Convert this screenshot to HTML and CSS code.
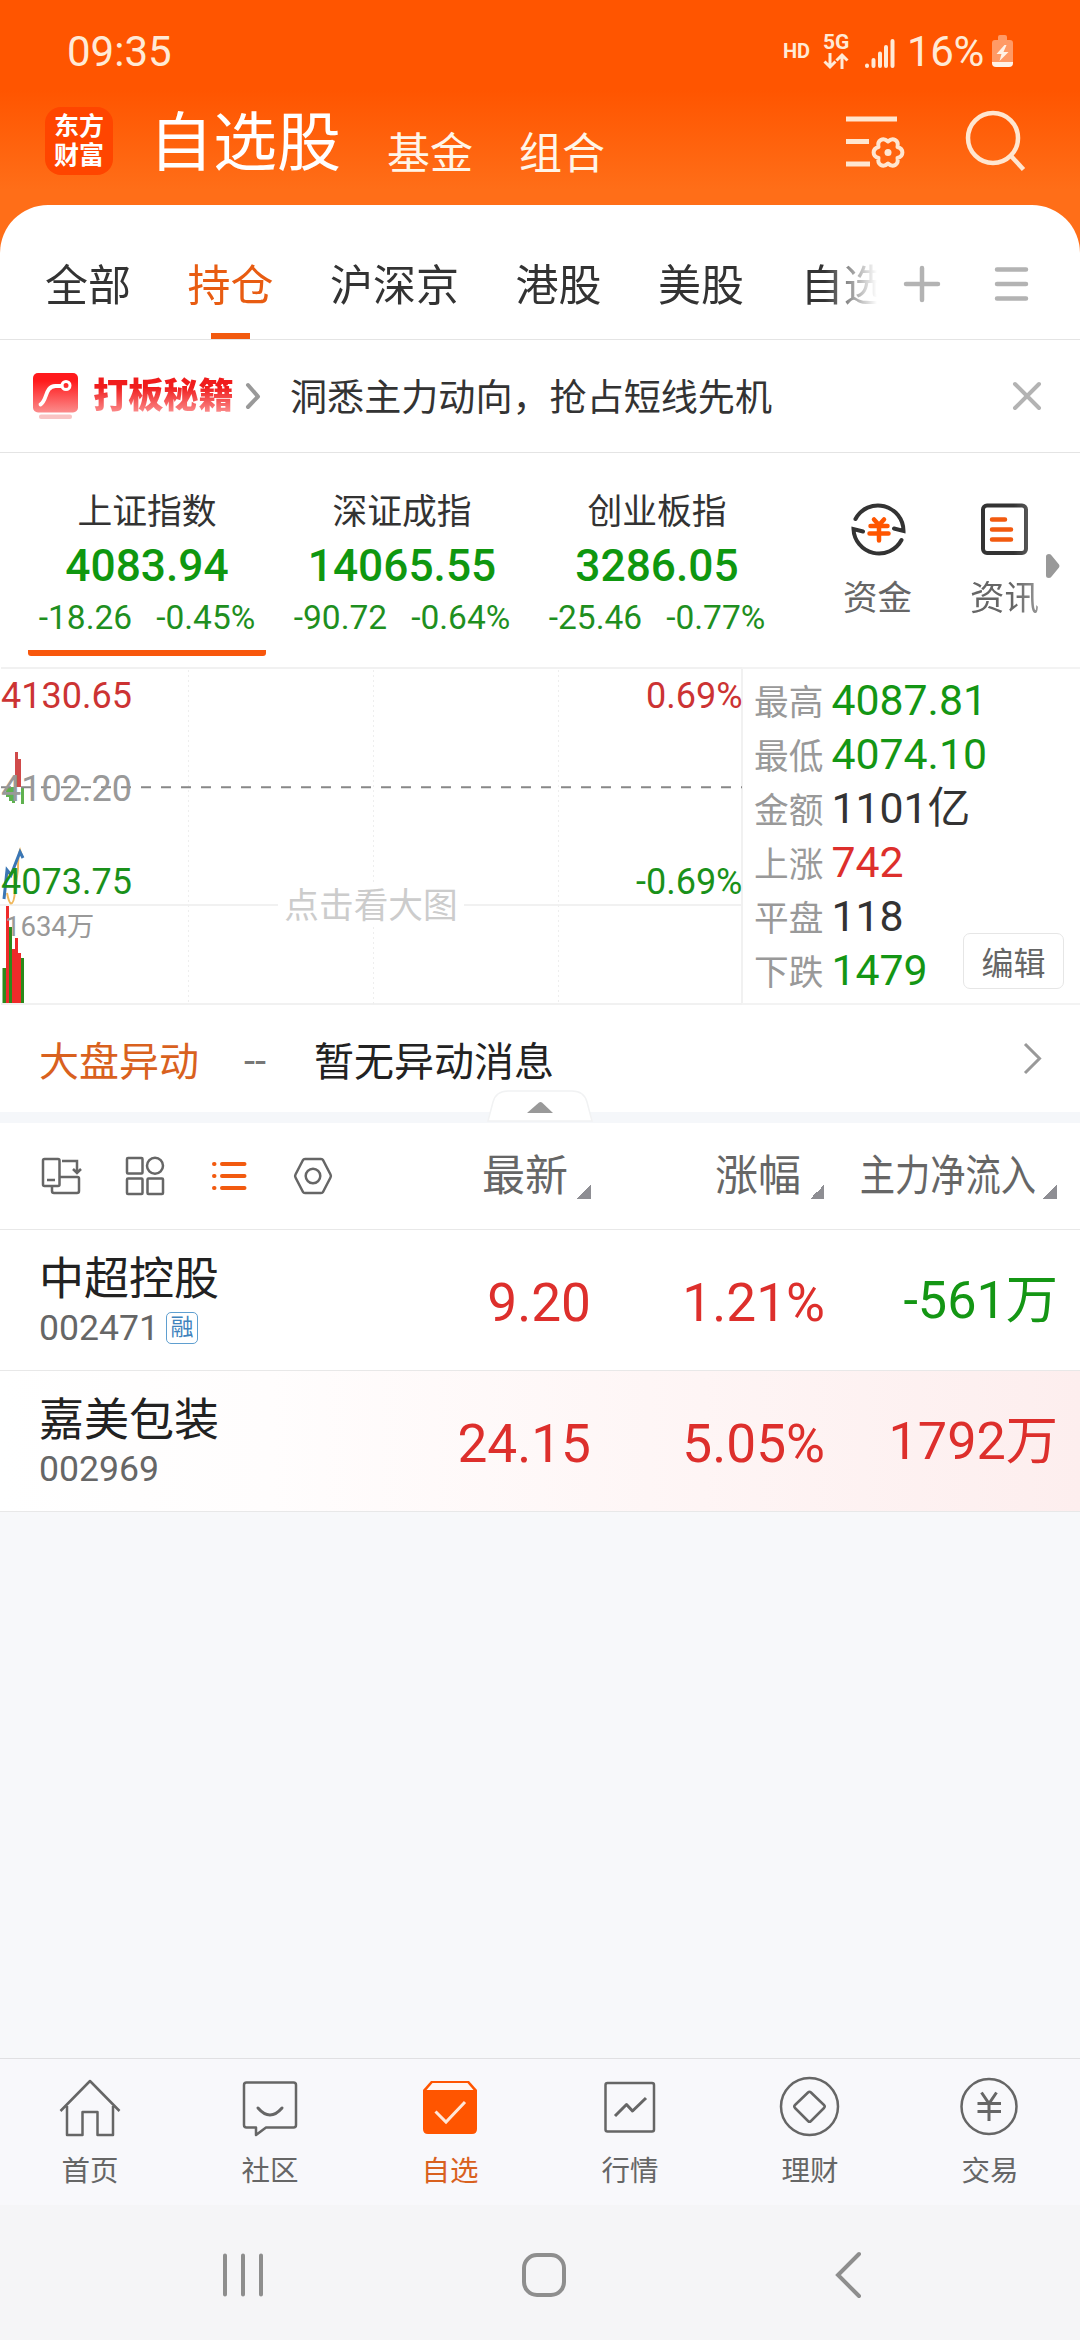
FILE: index.html
```html
<!DOCTYPE html>
<html lang="zh-CN">
<head>
<meta charset="utf-8">
<title>自选股</title>
<link rel="stylesheet" href="styles.css">
</head>
<body>
<div class="app">
  <header class="top">
    <div class="status">
      <span class="clock">09:35</span>
      <span class="hd">HD</span>
      <span class="net"><span class="net-label">5G</span>
        <svg width="26" height="16" viewBox="0 0 26 16" fill="none" stroke="#ffead6" stroke-width="3"><path d="M7 0v14M1.500 8.500L7 14l5.500-5.500M19 16V2M13.500 7.500L19 2l5.500 5.500"/></svg>
      </span>
      <svg class="signal" width="30" height="30" viewBox="0 0 30 30" stroke="#ffead6" stroke-width="4" stroke-linecap="round"><path d="M2 27.500v.5M8.500 22v6M15 15.500V28M21 9v19M27.500 3v25"/></svg>
      <span class="percent">16%</span>
      <svg class="battery" width="22" height="32" viewBox="0 0 22 32"><path d="M6 2q0-2 2-2h5q2 0 2 2v3h3q3 0 3 3v19H0V8q0-3 3-3h3z" fill="#ff9a66"/><path d="M0 27h21v1q0 4-4 4H4q-4 0-4-4z" fill="#fff3e8"/><path d="M12.500 10L4.500 19h5l-2 7 9-9h-5l3-7z" fill="#fff3e8"/></svg>
    </div>
    <div class="titlebar">
      <div class="logo"><span>东方</span><span>财富</span></div>
      <nav class="sections"><b class="main">自选股</b><span>基金</span><span>组合</span></nav>
      <svg class="tool-settings" width="60" height="60" viewBox="0 0 60 60" fill="none" stroke="#ffe6d0" stroke-width="5"><path d="M2 10h51M2 32.500h23M2 55h24"/><path stroke-width="4" stroke-linejoin="round" transform="translate(44 43.500)" d="M9.500-5.500C16-3.500 16 3.500 9.500 5.500 11 12.100 5 15.600 0 11-5 15.600-11 12.100-9.500 5.500-16 3.500-16-3.500-9.500-5.500-11-12.100-5-15.600 0-11 5-15.600 11-12.100 9.500-5.500z"/><circle cx="44" cy="43.500" r="3.500" fill="#ffe6d0" stroke="none"/></svg>
      <svg class="tool-search" width="62" height="62" viewBox="0 0 62 62" fill="none" stroke="#ffe6d0" stroke-width="4.500"><circle cx="29" cy="29" r="25"/><path d="M47 47l12.500 13.500"/></svg>
    </div>
  </header>

  <main class="sheet">
    <div class="groups">
      <div class="group-list"><span>全部</span><span class="active">持仓</span><span>沪深京</span><span>港股</span><span>美股</span><span>自选</span></div>
      <svg class="g-add" width="38" height="38" viewBox="0 0 38 38" stroke="#b3b3b3" stroke-width="4.500" stroke-linecap="round"><path d="M19 3v32M3 19h32"/></svg>
      <svg class="g-menu" width="38" height="38" viewBox="0 0 38 38" stroke="#b3b3b3" stroke-width="4.500" stroke-linecap="round"><path d="M4 4.500h29M4 19h29M4 33.500h29"/></svg>
    </div>

    <div class="promo">
      <svg class="promo-icon" width="46" height="46" viewBox="0 0 46 46"><defs><linearGradient id="pg" x2="0" y2="1"><stop offset=".2" stop-color="#ff1a1c"/><stop offset="1" stop-color="#fb8c8c"/></linearGradient></defs><rect width="45" height="39.500" rx="5" fill="url(#pg)"/><rect x="6" y="41.500" width="33" height="4.500" rx="2" fill="#f9c4c4"/><path d="M7.500 31.500c7-4 4-18 15-18.500h6" fill="none" stroke="#fff" stroke-width="3.800" stroke-linecap="round"/><circle cx="33" cy="12.500" r="4" fill="none" stroke="#fff" stroke-width="3"/></svg>
      <span class="promo-brand">打板秘籍</span>
      <svg class="promo-arrow" width="16" height="28" viewBox="0 0 16 28" fill="none" stroke="#999" stroke-width="4" stroke-linecap="round" stroke-linejoin="round"><path d="M3 3l10 11.500L3 25"/></svg>
      <span class="promo-text">洞悉主力动向，抢占短线先机</span>
      <svg class="promo-close" width="30" height="30" viewBox="0 0 30 30" stroke="#b3b3b3" stroke-width="4" stroke-linecap="round"><path d="M3 3l24 24M27 3L3 27"/></svg>
    </div>

    <div class="indices">
      <div class="index active"><span class="i-name">上证指数</span><span class="i-value">4083.94</span><span class="i-chg"><i>-18.26</i><i>-0.45%</i></span></div>
      <div class="index"><span class="i-name">深证成指</span><span class="i-value">14065.55</span><span class="i-chg"><i>-90.72</i><i>-0.64%</i></span></div>
      <div class="index"><span class="i-name">创业板指</span><span class="i-value">3286.05</span><span class="i-chg"><i>-25.46</i><i>-0.77%</i></span></div>
      <div class="links">
        <div class="link">
          <svg width="60" height="60" viewBox="0 0 60 60" fill="none" stroke="#333" stroke-width="4" stroke-linecap="round"><path d="M7.500 20A25.500 25.500 0 0 1 55.500 32l-9.500-2.500M53.500 41A25.500 25.500 0 0 1 5.500 30l9.500 2.500"/><path stroke="#ff5500" stroke-width="4.500" d="M26 20.500l5 5.500 5-5.500M22.500 27h17M21.500 34.500h19M31 26v15.500"/></svg>
          <span>资金</span>
        </div>
        <div class="link">
          <svg width="60" height="60" viewBox="0 0 60 60" fill="none" stroke="#333" stroke-width="4" stroke-linecap="round"><rect x="8" y="6.500" width="43" height="47.500" rx="4"/><path stroke="#f25a0f" stroke-width="4.500" d="M17 20.500h13M17 30.500h19M17 40.500h19"/></svg>
          <span>资讯</span>
        </div>
        <svg class="more" width="14" height="24" viewBox="0 0 14 24" fill="#999"><path d="M0 2.500Q0 0 3 0q2 0 3 2l7 8.500q1 1.500 0 3L6 22q-1 2-3 2-3 0-3-2.500z"/></svg>
      </div>
    </div>

    <div class="market">
      <svg class="chart" width="742" height="338" viewBox="0 0 742 338">
        <g stroke="#f1f1f1" stroke-width="2"><path d="M1 1h741M0 238h278M464 238h278M1 337h741M742 0v338"/></g>
        <path d="M188.500 3v334M373.500 3v213M373.500 260v77M558.500 3v334" stroke="#eee" stroke-dasharray="2 3"/>
        <g fill="#d04a4a"><path d="M15 85h3v35h-3zM18 92h3v28h-3z"/></g>
        <g fill="#5fb14f"><path d="M6 120h3v10H6zM9 120h3v14H9zM12 120h3v16h-3zM21 120h3v17h-3z"/></g>
        <path d="M1 120.300h741" stroke="#888" stroke-width="2" stroke-dasharray="10 10"/>
        <path d="M7 226q2 10 4 10.500 3 0 4-12.500l3-22q0-14 2-19l2 6" fill="none" stroke="#f0b95e" stroke-width="2"/>
        <path d="M4 232l3-29 4 5 9-23 3 6" fill="none" stroke="#3a76b5" stroke-width="3"/>
        <g fill="#ee2a2a"><path d="M6 239h3v97H6zM12 282h3v54h-3zM15 271h3v65h-3zM18 286h3v50h-3z"/></g>
        <g fill="#2b8a1a"><path d="M2.500 301H6v35H2.500zM9 260h3v76H9zM21 291h3v45h-3z"/></g>
        <g font-size="36">
          <text x="1" y="41" fill="#cc3333">4130.65</text>
          <text x="1" y="133.500" fill="#999">4102.20</text>
          <text x="1" y="227" fill="#1a911a">4073.75</text>
          <g text-anchor="end"><text x="742.500" y="41" fill="#cc3333">0.69%</text><text x="742.500" y="227" fill="#1a911a">-0.69%</text></g>
        </g>
        <text x="5" y="269" fill="#999" font-size="27.500">1634万</text>
        <text x="371" y="251" fill="#ccc" font-size="34.700" text-anchor="middle">点击看大图</text>
      </svg>
      <div class="stats">
        <div><span>最高</span><b class="down">4087.81</b></div>
        <div><span>最低</span><b class="down">4074.10</b></div>
        <div><span>金额</span><b>1101亿</b></div>
        <div><span>上涨</span><b class="up">742</b></div>
        <div><span>平盘</span><b>118</b></div>
        <div><span>下跌</span><b class="down">1479</b></div>
        <button class="edit">编辑</button>
      </div>
    </div>

    <div class="alerts">
      <span class="a-title">大盘异动</span><span class="a-dash">--</span><span class="a-text">暂无异动消息</span>
      <svg class="a-arrow" width="20" height="34" viewBox="0 0 20 34" fill="none" stroke="#999" stroke-width="3"><path d="M2 3l14.500 14.500L2 32"/></svg>
    </div>
    <div class="divider">
      <svg class="handle" width="108" height="34" viewBox="0 0 108 34"><path d="M2 32L7 13Q10 2 22 2H86Q98 2 101 13l5 19z" fill="#fff" stroke="#f1f2f3" stroke-width="1.500"/><path d="M28 24l12-10.500q1.500-1 3 0L54 24z" transform="translate(13)" fill="#999"/></svg>
    </div>

    <div class="cols">
      <div class="views">
        <svg width="40" height="40" viewBox="0 0 40 40" fill="none" stroke="#666" stroke-width="2.500"><rect x="2" y="3" width="16.500" height="27" rx="1.500"/><path d="M6 24h8M21 5h15v10M32 13l4 4 4-4M19 21h17.500q1.500 0 1.500 1.500V35q0 2-2 2H13q-2 0-2-2v-5"/></svg>
        <svg width="40" height="40" viewBox="0 0 40 40" fill="none" stroke="#666" stroke-width="2.500"><rect x="2" y="2" width="15.500" height="15.500" rx="1"/><circle cx="30" cy="9.800" r="8"/><rect x="2" y="22.500" width="15.500" height="15.500" rx="1"/><rect x="22.500" y="22.500" width="15.500" height="15.500" rx="1"/></svg>
        <svg width="40" height="40" viewBox="0 0 40 40" stroke="#f25a0f" stroke-width="4" stroke-linecap="round"><path d="M5 8h.5M13 8h22.500M5 20h.5M13 20h22.500M5 32h.5M13 32h22.500"/></svg>
        <svg width="40" height="40" viewBox="0 0 40 40" fill="none" stroke="#666" stroke-width="2.500" stroke-linejoin="round"><path d="M12 3h16q1.500 0 2 1l7.500 14.500q.8 1.500 0 3L30 36q-.5 1-2 1H12q-1.500 0-2-1L2.500 21.500q-.8-1.500 0-3L10 4q.5-1 2-1z"/><circle cx="20" cy="20" r="7.300"/></svg>
      </div>
      <div class="col c1">最新</div>
      <div class="col c2">涨幅</div>
      <div class="col c3"><span>主力净流入</span></div>
    </div>

    <div class="stock">
      <div class="who"><span class="name">中超控股</span><span class="code">002471<em>融</em></span></div>
      <span class="n n1 up">9.20</span><span class="n n2 up">1.21%</span><span class="n n3 down">-561万</span>
    </div>
    <div class="stock hot">
      <div class="who"><span class="name">嘉美包装</span><span class="code">002969</span></div>
      <span class="n n1 up">24.15</span><span class="n n2 up">5.05%</span><span class="n n3 up">1792万</span>
    </div>
  </main>

  <nav class="tabbar">
    <a><svg width="64" height="64" viewBox="0 0 64 64" fill="none" stroke="#666" stroke-width="2.500" stroke-linejoin="round"><path d="M2.500 38L32 8l29.500 30M9 33v29h15.500V39h15v23H55V33"/></svg><span>首页</span></a>
    <a><svg width="64" height="64" viewBox="0 0 64 64" fill="none" stroke="#666" stroke-width="2.500" stroke-linejoin="round"><path d="M8.500 9.500h47q2.500 0 2.500 2.500v40q0 2.500-2.500 2.500H28l-10 7.500v-7.500H8.500Q6 54.500 6 52V12q0-2.500 2.500-2.500z"/><path stroke-linecap="round" stroke-width="3" d="M20 35q12 14 24 0"/></svg><span>社区</span></a>
    <a class="on"><svg width="64" height="64" viewBox="0 0 64 64"><path d="M5 17L13 8h38l8 9v39q0 5-5 5H10q-5 0-5-5z" fill="#ff5500"/><path d="M8.500 17L14.500 10h35l6 7z" fill="#fff7f2"/><path d="M17.500 38.500L28 49l19-20" fill="none" stroke="#ffe6d8" stroke-width="3"/></svg><span>自选</span></a>
    <a><svg width="64" height="64" viewBox="0 0 64 64" fill="none" stroke="#666" stroke-width="2.500" stroke-linejoin="round"><rect x="7.500" y="10" width="48.500" height="48.500" rx="2"/><path stroke-width="3" d="M17 43l11.500-11.500L34.500 38 48 25"/></svg><span>行情</span></a>
    <a><svg width="64" height="64" viewBox="0 0 64 64" fill="none" stroke="#666" stroke-width="2.500" stroke-linejoin="round"><circle cx="31.500" cy="33.500" r="28.500"/><path d="M30 19.500q1.500-1.500 3 0l13 12.500q1.500 1.500 0 3l-13 13q-1.500 1.500-3 0L17 35q-1.500-1.500 0-3z"/></svg><span>理财</span></a>
    <a><svg width="64" height="64" viewBox="0 0 64 64" fill="none" stroke="#666" stroke-width="2.500"><circle cx="31" cy="33.500" r="27.500"/><path stroke-width="3" d="M23.500 19.500l7.500 11 7.500-11M19.500 30.500h23.500M19.500 38.500h23.500M31 30v18"/></svg><span>交易</span></a>
  </nav>
  <div class="sysnav">
    <svg width="40" height="46" viewBox="0 0 40 46" stroke="#8e8e8e" stroke-width="4" stroke-linecap="round"><path d="M2 3.500v39M20 3.500v39M38 3.500v39"/></svg>
    <svg width="46" height="46" viewBox="0 0 46 46" fill="none" stroke="#8e8e8e" stroke-width="4"><rect x="3" y="3" width="40" height="40" rx="13"/></svg>
    <svg width="28" height="48" viewBox="0 0 28 48" fill="none" stroke="#8e8e8e" stroke-width="4" stroke-linecap="round"><path d="M25 3L4 24l21 21"/></svg>
  </div>
</div>
</body>
</html>
```
FILE: styles.css
```css
* { box-sizing: border-box; }
html, body { margin: 0; }
body { width: 1080px; height: 2340px; overflow: hidden; font-family: Roboto, "Noto Sans CJK SC", sans-serif; color: #333; background: #f7f8fa; }
svg { display: block; flex: none; overflow: visible; }
b, i, em { font-weight: 400; font-style: normal; }
.app { display: flex; flex-direction: column; height: 2340px; }
.up { color: #dd2f2c; }
.down { color: #149614; }

/* header */
.top { height: 265px; flex: none; background: linear-gradient(#ff5500 0, #ff5500 90px, #ff6e18 190px, #ff6e18 100%); color: #fff; }
.status { height: 102px; display: flex; align-items: center; padding-left: 67px; color: #ffead6; }
.clock { font-size: 42px; width: 716px; }
.hd { font-size: 20px; font-weight: 700; width: 40px; }
.net { width: 42px; height: 36px; display: flex; flex-direction: column; gap: 1px; }
.net-label { font-size: 21px; font-weight: 700; line-height: 19px; }
.signal { margin-top: 3px; margin-right: 12px; }
.percent { font-size: 42px; width: 86px; letter-spacing: -0.300px; }
.battery { margin-left: -1px; }
.titlebar { height: 103px; display: flex; padding: 5px 0 0 45px; }
.logo { width: 68px; height: 68px; border-radius: 16px; background: #ff4500; display: flex; flex-direction: column; align-items: center; justify-content: center; font-size: 25px; line-height: 29px; font-weight: 700; padding-bottom: 1px; }
.sections { display: flex; align-items: baseline; margin-left: 36px; width: 695px; font-size: 43px; line-height: 74px; color: #fff5e8; height: 74px; }
.sections span { margin-left: 46px; transform: translateY(4px); }
.sections .main { font-size: 64px; color: #fff; }
.tool-settings { margin-top: 2px; }
.tool-search { margin-left: 60px; margin-top: 2px; }

/* white sheet */
.sheet { margin-top: -60px; background: #fff; border-radius: 48px 48px 0 0; flex: none; }
.groups { height: 135px; border-bottom: 1px solid #e4e4e4; display: flex; align-items: center; padding-top: 24px; }
.group-list { width: 877px; height: 111px; padding-left: 45px; display: flex; gap: 56.500px; overflow: hidden; white-space: nowrap; font-size: 43px; line-height: 115px; -webkit-mask-image: linear-gradient(90deg, #000 825px, transparent 877px); mask-image: linear-gradient(90deg, #000 825px, transparent 877px); }
.group-list .active { color: #e85c12; background: linear-gradient(#f25a0f, #f25a0f) center 104px / 39px 6px no-repeat; }
.g-add { margin-left: 26px; }
.g-menu { margin-left: 52px; }
.promo { height: 113px; border-bottom: 1px solid #e4e4e4; display: flex; align-items: center; padding-left: 33px; }
.promo-brand { margin-left: 14px; width: 141px; font-size: 35.200px; font-weight: 900; line-height: 44px; background: linear-gradient(#f01c1c 30%, #fb8c8c 88%); -webkit-background-clip: text; background-clip: text; color: transparent; }
.promo-arrow { margin-left: 11px; }
.promo-text { margin: -2px 0 0 29px; width: 722px; font-size: 37.100px; }

.indices { height: 214px; display: flex; padding-left: 28px; gap: 17px; }
.index { width: 238px; flex: none; display: flex; flex-direction: column; align-items: center; padding-top: 35px; height: 203px; white-space: nowrap; }
.index.active { background: linear-gradient(#f8570c, #f8570c) 0 100% / 238px 6px no-repeat; border-radius: 0 0 3px 3px; }
.i-name { font-size: 34.800px; line-height: 48px; }
.i-value { font-size: 44.300px; font-weight: 500; line-height: 60px; color: #0f970f; }
.i-chg { font-size: 33.500px; line-height: 48px; color: #1f8f1f; display: flex; gap: 24px; margin-top: -2px; }
.links { display: flex; margin-left: 21px; flex: 1; }
.link { width: 127px; flex: none; display: flex; flex-direction: column; align-items: center; padding-top: 46px; font-size: 34.500px; line-height: 50px; color: #666; }
.link span { margin-top: 14px; }
.link:nth-child(2) { -webkit-mask-image: linear-gradient(90deg, #000 60%, rgba(0,0,0,.5)); mask-image: linear-gradient(90deg, #000 60%, rgba(0,0,0,.5)); width: 95px; margin-left: 16px; }
.more { margin: 101px 0 0 -6px; }

/* market overview */
.market { height: 338px; display: flex; }
.stats { flex: 1; display: grid; grid-template-rows: repeat(6, 54px); padding: 4px 0 0 12px; border-top: 2px solid #f3f3f3; border-bottom: 2px solid #f3f3f3; position: relative; }
.stats div { display: flex; align-items: center; font-size: 34.700px; color: #999; }
.stats b { margin-left: 8px; font-size: 42.800px; line-height: 54px; color: #333; white-space: nowrap; }
.stats .up { color: #dd2f2c; }
.stats .down { color: #149614; }
.edit { position: absolute; right: 16px; bottom: 14px; width: 101px; height: 56px; border: 1px solid #e6e6e6; border-radius: 7px; background: #fff; color: #666; font: 32px/54px Roboto, "Noto Sans CJK SC", sans-serif; padding: 3px 0 0; }

.alerts { height: 107px; display: flex; align-items: center; padding: 0 0 0 39px; font-size: 40px; }
.a-title { color: #d9611e; width: 205px; }
.a-dash { color: #777; width: 70px; padding-top: 5px; }
.a-text { color: #222; width: 709px; }
.a-arrow { margin-top: -1px; }
.divider { height: 11px; background: #f5f7fa; display: flex; justify-content: center; position: relative; }
.handle { margin-top: -23px; }

/* table */
.cols { height: 107px; border-bottom: 1px solid #e8e8e8; display: flex; font-size: 43px; line-height: 107px; color: #666; }
.views { display: flex; gap: 44px; padding-left: 41px; width: 440px; align-items: center; }
.col { text-align: right; white-space: nowrap; padding-right: 23px; height: 107px; background: linear-gradient(135deg, transparent 50%, #8e8e93 50%) right 62px / 14px 14px no-repeat; }
.c1 { width: 151px; }
.c2 { width: 233px; }
.c3 { width: 233px; }
.c3 span { display: inline-block; width: 215px; margin-left: -20px; transform: translateX(2px) scaleX(.82); transform-origin: right; }
.stock { height: 141px; border-bottom: 1px solid #e8e8e8; display: flex; }
.hot { background: linear-gradient(90deg, #fff 0, #fffdfd 25%, #fdeeee 100%); }
.who { width: 390px; padding: 18px 0 0 39px; display: flex; flex-direction: column; }
.name { font-size: 45px; line-height: 64px; color: #222; }
.code { font-size: 35.600px; line-height: 32px; color: #666; display: flex; }
.code em { margin-left: 7px; width: 32px; height: 32px; border: 1.500px solid #5f9fd0; border-radius: 5px; font-size: 23px; line-height: 29px; color: #3f83bd; text-align: center; }
.n { text-align: right; font-size: 53.200px; line-height: 146px; height: 140px; white-space: nowrap; }
.n1 { width: 201px; }
.n2 { width: 234px; }
.n3 { width: 233px; font-size: 52.200px; line-height: 142px; }

/* bottom bars */
.tabbar { margin-top: auto; height: 147px; flex: none; border-top: 1px solid #e0e0e2; background: #f8f8fb; display: flex; padding-top: 14px; }
.tabbar a { width: 180px; display: flex; flex-direction: column; align-items: center; font-size: 28.500px; line-height: 40px; color: #666; }
.tabbar span { margin-top: 15px; }
.tabbar .on { color: #d9611e; }
.sysnav { height: 135px; flex: none; background: #f5f5f7; display: flex; align-items: center; padding: 5px 0 0 223px; }
.sysnav svg:nth-child(2) { margin-left: 258px; }
.sysnav svg:nth-child(3) { margin-left: 267px; }
```
